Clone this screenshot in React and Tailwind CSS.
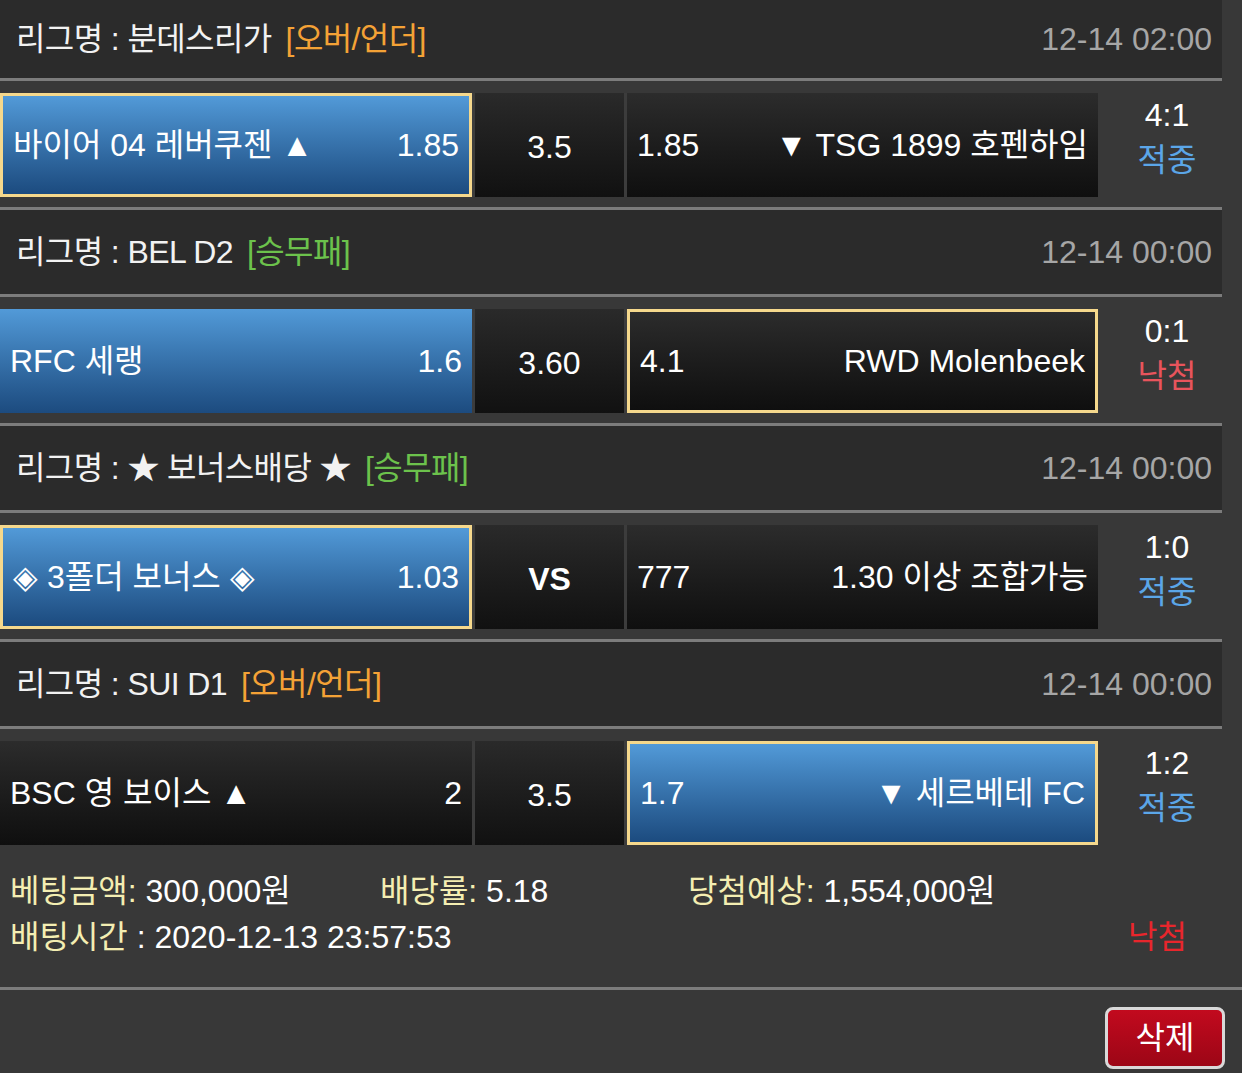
import React from "react";

const FONT = "font-['Liberation_Sans','Noto_Sans_CJK_KR',sans-serif]";

const blocks = [
  {
    league: "분데스리가",
    tag: "[오버/언더]",
    tagColor: "text-[#f4a236]",
    date: "12-14 02:00",
    home: "바이어 04 레버쿠젠 ▲",
    homeOdds: "1.85",
    mid: "3.5",
    awayOdds: "1.85",
    away: "▼ TSG 1899 호펜하임",
    score: "4:1",
    result: "적중",
    win: true,
    homeBlue: true,
    homeSel: true,
    awayBlue: false,
    awaySel: false,
  },
  {
    league: "BEL D2",
    tag: "[승무패]",
    tagColor: "text-[#6cc24c]",
    date: "12-14 00:00",
    home: "RFC 세랭",
    homeOdds: "1.6",
    mid: "3.60",
    awayOdds: "4.1",
    away: "RWD Molenbeek",
    score: "0:1",
    result: "낙첨",
    win: false,
    homeBlue: true,
    homeSel: false,
    awayBlue: false,
    awaySel: true,
  },
  {
    league: "★ 보너스배당 ★",
    tag: "[승무패]",
    tagColor: "text-[#6cc24c]",
    date: "12-14 00:00",
    home: "◈ 3폴더 보너스 ◈",
    homeOdds: "1.03",
    mid: "VS",
    midBold: true,
    awayOdds: "777",
    away: "1.30 이상 조합가능",
    score: "1:0",
    result: "적중",
    win: true,
    homeBlue: true,
    homeSel: true,
    awayBlue: false,
    awaySel: false,
  },
  {
    league: "SUI D1",
    tag: "[오버/언더]",
    tagColor: "text-[#f4a236]",
    date: "12-14 00:00",
    home: "BSC 영 보이스 ▲",
    homeOdds: "2",
    mid: "3.5",
    awayOdds: "1.7",
    away: "▼ 세르베테 FC",
    score: "1:2",
    result: "적중",
    win: true,
    homeBlue: false,
    homeSel: false,
    awayBlue: true,
    awaySel: true,
    last: true,
  },
];

function Cell({ blue, sel, left, right, width }) {
  const bg = blue
    ? "bg-gradient-to-b from-[#529ad8] to-[#1c4b7f]"
    : "bg-gradient-to-b from-[#2c2c2c] to-[#0f0f0f]";
  const border = sel ? "border-[3px] border-[#f5d88c]" : "";
  return (
    <div
      className={`${width} h-[104px] box-border ${bg} ${border} flex items-center justify-between px-[10px] text-white text-[32px] whitespace-nowrap`}
    >
      <span>{left}</span>
      <span>{right}</span>
    </div>
  );
}

function Block({ b, first }) {
  return (
    <div className="w-[1222px]">
      <div
        className={`${first ? "h-[78px]" : "h-[84px]"} bg-[#2b2b2b] flex items-center justify-between pl-[16px] pr-[10px] text-[32px] whitespace-nowrap`}
      >
        <div className="text-[#f2f2f2] tracking-[-0.6px]">
          리그명 : {b.league}
          <span className={`ml-[14px] ${b.tagColor}`}>{b.tag}</span>
        </div>
        <div className="text-[#a6a6a6]">{b.date}</div>
      </div>
      <div className="h-[3px] bg-[#7c7c7c]" />
      <div className="h-[126px] bg-[#383838] pt-[12px] box-border flex items-start">
        <Cell
          blue={b.homeBlue}
          sel={b.homeSel}
          left={b.home}
          right={b.homeOdds}
          width="w-[472px]"
        />
        <div className="w-[3px] h-[104px] bg-[#3c3c3c]" />
        <div
          className={`w-[149px] h-[104px] bg-gradient-to-b from-[#2a2a2a] to-[#111111] flex items-center justify-center pt-[4px] box-border text-white text-[32px] ${b.midBold ? "font-bold" : ""}`}
        >
          {b.mid}
        </div>
        <div className="w-[3px] h-[104px] bg-[#3c3c3c]" />
        <Cell
          blue={b.awayBlue}
          sel={b.awaySel}
          left={b.awayOdds}
          right={b.away}
          width="w-[471px]"
        />
        <div className="flex-1 h-[104px] flex flex-col items-center pl-[14px] text-[32px] leading-[45px]">
          <div className="text-white">{b.score}</div>
          <div className={b.win ? "text-[#5ba6e8]" : "text-[#e8545c]"}>
            {b.result}
          </div>
        </div>
      </div>
      {!b.last && <div className="h-[3px] bg-[#7c7c7c]" />}
    </div>
  );
}

export default function App() {
  return (
    <div
      className={`w-[1242px] h-[1073px] bg-[#383838] overflow-hidden ${FONT}`}
    >
      {blocks.map((b, i) => (
        <Block key={i} b={b} first={i === 0} />
      ))}
      <div className="w-[1222px] pt-[13px] pb-[27px] pl-[10px] text-[32px] leading-[46px] whitespace-nowrap">
        <div className="flex">
          <div className="w-[370px]">
            <span className="text-[#f4eeb2]">베팅금액:</span>
            <span className="text-white"> 300,000원</span>
          </div>
          <div className="w-[308px]">
            <span className="text-[#f4eeb2]">배당률:</span>
            <span className="text-white"> 5.18</span>
          </div>
          <div>
            <span className="text-[#f4eeb2]">당첨예상:</span>
            <span className="text-white"> 1,554,000원</span>
          </div>
        </div>
        <div className="flex justify-between pr-[35px]">
          <div>
            <span className="text-[#f4eeb2]">배팅시간</span>
            <span className="text-white"> : 2020-12-13 23:57:53</span>
          </div>
          <div className="text-[#e8262c]">낙첨</div>
        </div>
      </div>
      <div className="h-[3px] bg-[#7c7c7c]" />
      <div className="flex justify-end pr-[17px] pt-[17px]">
        <button className="w-[120px] h-[62px] rounded-[8px] border-[3px] border-[#d9d9d9] bg-gradient-to-b from-[#c20a1e] to-[#9c0616] text-white text-[32px] flex items-center justify-center">
          삭제
        </button>
      </div>
    </div>
  );
}
